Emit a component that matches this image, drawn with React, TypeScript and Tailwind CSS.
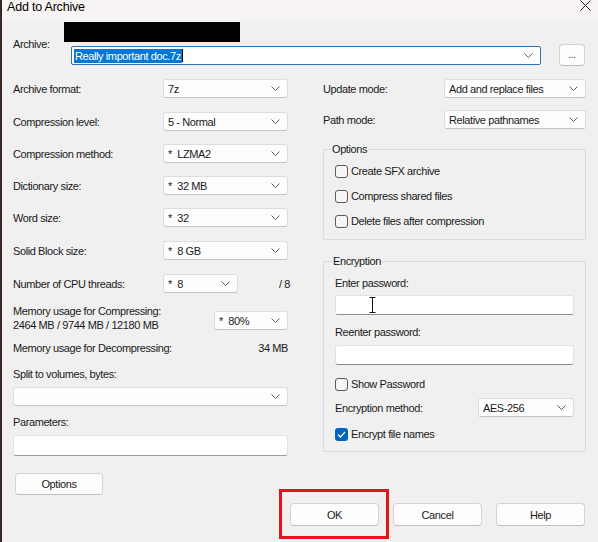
import React from 'react';

const Chevron = () => (
    <svg width="9" height="5" viewBox="0 0 9 5" className="shrink-0">
        <path d="M0.5 0.5 L4.5 4.5 L8.5 0.5" fill="none" stroke="#5c5c5c" strokeWidth="1" />
    </svg>
);

const Combo: React.FC<{ value?: string; className?: string }> = ({ value = '', className = '' }) => (
    <div
        className={`flex items-center justify-between h-[19px] pl-[4px] pr-[7px] bg-[#fdfdfd] border border-[#dedede] border-b-[#c4c4c4] rounded-[3px] whitespace-pre ${className}`}
    >
        <span>{value}</span>
        <Chevron />
    </div>
);

const Check: React.FC<{ label: string; checked?: boolean }> = ({ label, checked }) => (
    <div className="flex items-center h-[14px]">
        {checked ? (
            <div className="w-[13px] h-[13px] rounded-[3px] bg-[#0067c0] flex items-center justify-center">
                <svg width="9" height="7" viewBox="0 0 9 7">
                    <path d="M1 3.5 L3.4 6 L8 1" fill="none" stroke="#fff" strokeWidth="1.2" />
                </svg>
            </div>
        ) : (
            <div className="w-[13px] h-[13px] rounded-[3px] border border-[#5a5a5a] bg-[#f6f6f6]" />
        )}
        <span className="ml-[3px]">{label}</span>
    </div>
);

const Row: React.FC<{ label: string; children: React.ReactNode; className?: string }> = ({ label, children, className = '' }) => (
    <div className={`flex items-center justify-between h-[19px] ${className}`}>
        <span>{label}</span>
        {children}
    </div>
);

const Button: React.FC<{ label: string; className?: string }> = ({ label, className = '' }) => (
    <div
        className={`flex items-center justify-center bg-[#fdfdfd] border border-[#d3d3d3] border-b-[#bdbdbd] rounded-[4px] ${className}`}
    >
        {label}
    </div>
);

export default function App() {
    return (
        <div className="w-[598px] h-[542px] overflow-hidden bg-[#f0f0f0] border-l-2 border-[#3a2824] text-[11px] leading-[14px] tracking-[-0.4px] text-[#1a1a1a] [font-family:'Liberation_Sans',Arial,sans-serif]">
            {/* Title bar */}
            <div className="flex items-start justify-between h-[20px] bg-[#f9f4f4] pl-[5px] pr-[7px]">
                <span className="text-[12.5px] leading-[14px] tracking-[-0.2px] text-black">Add to Archive</span>
                <svg width="11" height="11" viewBox="0 0 11 11" className="mt-[0px]">
                    <path d="M0.5 0.5 L10.5 10.5 M10.5 0.5 L0.5 10.5" stroke="#222" strokeWidth="1" />
                </svg>
            </div>

            <div className="pl-[11px] pr-[12px]">
                {/* Archive */}
                <div className="flex items-start">
                    <span className="w-[58px] mt-[17px] shrink-0">Archive:</span>
                    <div className="flex flex-col">
                        <div className="w-[176px] h-[20px] bg-black ml-[-7px] mt-[2px]" />
                        <div className="flex items-start mt-[2px]">
                            <div className="flex items-center justify-between w-[470px] h-[19px] mt-[2px] pl-[2px] pr-[7px] bg-white border border-[#2c72b8] rounded-[2px]">
                                <div className="flex items-center">
                                    <span className="bg-[#0078d7] text-white px-[1px] leading-[14px]">Really important doc.7z</span>
                                    <span className="w-[1px] h-[13px] bg-black" />
                                </div>
                                <Chevron />
                            </div>
                            <Button label="..." className="ml-[18px] w-[26px] h-[22px] text-[10px] text-[#444]" />
                        </div>
                    </div>
                </div>

                {/* Columns */}
                <div className="flex mt-[13px] gap-[35px]">
                    {/* Left */}
                    <div className="flex flex-col w-[275px]">
                        <Row label="Archive format:">
                            <Combo value="7z" className="w-[125px]" />
                        </Row>
                        <Row label="Compression level:" className="mt-[14px]">
                            <Combo value="5 - Normal" className="w-[125px]" />
                        </Row>
                        <Row label="Compression method:" className="mt-[13px]">
                            <Combo value="*  LZMA2" className="w-[125px]" />
                        </Row>
                        <Row label="Dictionary size:" className="mt-[13px]">
                            <Combo value="*  32 MB" className="w-[125px]" />
                        </Row>
                        <Row label="Word size:" className="mt-[13px]">
                            <Combo value="*  32" className="w-[125px]" />
                        </Row>
                        <Row label="Solid Block size:" className="mt-[14px]">
                            <Combo value="*  8 GB" className="w-[125px]" />
                        </Row>
                        <div className="flex items-center h-[19px] mt-[14px]">
                            <span className="w-[150px]">Number of CPU threads:</span>
                            <Combo value="*  8" className="w-[75px]" />
                            <span className="ml-auto mr-[-2px]">/ 8</span>
                        </div>

                        <div className="flex items-start justify-between mt-[11px]">
                            <div className="flex flex-col">
                                <span>Memory usage for Compressing:</span>
                                <span>2464 MB / 9744 MB / 12180 MB</span>
                            </div>
                            <Combo value="*  80%" className="w-[74px] mt-[7px]" />
                        </div>
                        <div className="flex justify-between mt-[9px]">
                            <span>Memory usage for Decompressing:</span>
                            <span>34 MB</span>
                        </div>

                        <span className="mt-[12px]">Split to volumes, bytes:</span>
                        <Combo className="w-[275px] mt-[6px]" />

                        <span className="mt-[9px]">Parameters:</span>
                        <div className="w-[275px] h-[21px] mt-[6px] bg-white border border-[#e2e2e2] border-b-[#9a9a9a] rounded-[3px]" />

                        <Button label="Options" className="w-[88px] h-[22px] mt-[17px] ml-[2px]" />
                    </div>

                    {/* Right */}
                    <div className="flex flex-col w-[263px]">
                        <Row label="Update mode:">
                            <Combo value="Add and replace files" className="w-[142px]" />
                        </Row>
                        <Row label="Path mode:" className="mt-[12px]">
                            <Combo value="Relative pathnames" className="w-[142px]" />
                        </Row>

                        <fieldset className="mt-[13px] border border-[#d9d9d9] rounded-[2px]">
                            <legend className="ml-[7px] px-[1px]">Options</legend>
                            <div className="flex flex-col gap-[11px] pt-[8px] pb-[11px] pl-[11px]">
                                <Check label="Create SFX archive" />
                                <Check label="Compress shared files" />
                                <Check label="Delete files after compression" />
                            </div>
                        </fieldset>

                        <fieldset className="mt-[14px] border border-[#d9d9d9] rounded-[2px]">
                            <legend className="ml-[8px] px-[1px]">Encryption</legend>
                            <div className="flex flex-col pt-[8px] pb-[10px] pl-[11px] pr-[11px]">
                                <span>Enter password:</span>
                                <div className="relative h-[20px] mt-[5px] bg-white border border-[#e2e2e2] border-b-[#8c8c8c] rounded-[3px]">
                                    <svg width="7" height="16" viewBox="0 0 7 16" className="absolute left-[33px] top-[1px]">
                                        <path d="M0.5 0.5 H6.5 M3.5 0.5 V15.5 M0.5 15.5 H6.5" stroke="#111" strokeWidth="1" fill="none" />
                                    </svg>
                                </div>
                                <span className="mt-[10px]">Reenter password:</span>
                                <div className="h-[20px] mt-[6px] bg-white border border-[#e2e2e2] border-b-[#8c8c8c] rounded-[3px]" />
                                <div className="mt-[12px]">
                                    <Check label="Show Password" />
                                </div>
                                <Row label="Encryption method:" className="mt-[7px]">
                                    <Combo value="AES-256" className="w-[96px]" />
                                </Row>
                                <div className="mt-[10px]">
                                    <Check label="Encrypt file names" checked />
                                </div>
                            </div>
                        </fieldset>
                    </div>
                </div>

                {/* Bottom buttons */}
                <div className="flex justify-end gap-[14px] mt-[8px] mr-[1px]">
                    <div className="relative">
                        <Button label="OK" className="w-[89px] h-[23px] border-[#4f8ccb] border-b-[#4f8ccb]" />
                        <div className="absolute left-[-11px] top-[-14px] w-[110px] h-[50px] border-[3px] border-[#e3151c]" />
                    </div>
                    <Button label="Cancel" className="w-[89px] h-[23px]" />
                    <Button label="Help" className="w-[89px] h-[23px]" />
                </div>
            </div>
        </div>
    );
}
